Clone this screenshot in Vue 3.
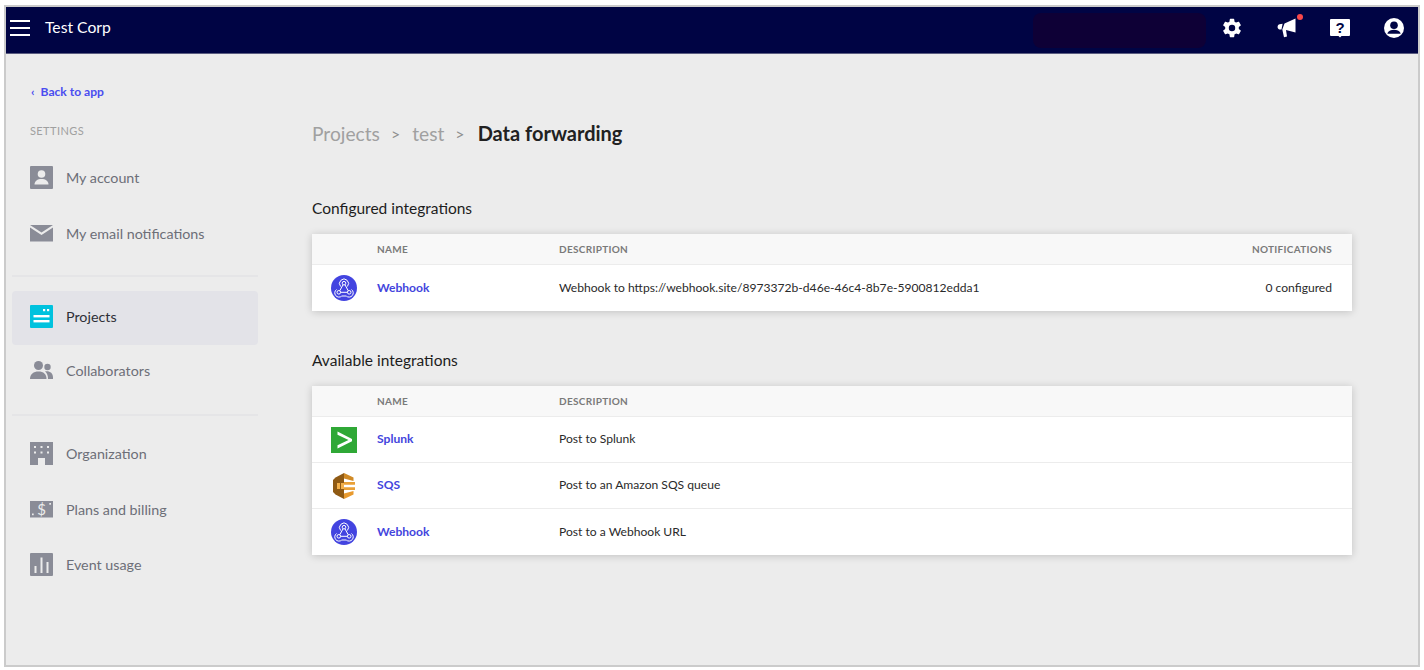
<template>
  <div class="frame">
    <header class="topbar">
      <div class="hamburger"><span></span><span></span><span></span></div>
      <div class="org">Test Corp</div>
      <div class="redacted"></div>
      <div class="top-icons">
        <svg class="top-icon gear" viewBox="0 0 24 24" width="22" height="22">
          <path fill="#fff" d="M19.4 13a7.6 7.6 0 0 0 0-2l2.1-1.6a.5.5 0 0 0 .1-.7l-2-3.4a.5.5 0 0 0-.6-.2l-2.5 1a7.3 7.3 0 0 0-1.700-1l-.4-2.700a.5.5 0 0 0-.5-.4h-3.800a.5.5 0 0 0-.5.4l-.4 2.700a7.3 7.3 0 0 0-1.700 1l-2.500-1a.5.5 0 0 0-.6.2l-2 3.400a.5.5 0 0 0 .1.7L4.600 11a7.600 7.600 0 0 0 0 2l-2.100 1.600a.5.5 0 0 0-.1.7l2 3.400c.1.2.4.3.6.2l2.500-1c.5.4 1.100.7 1.700 1l.4 2.700c0 .2.3.4.5.4h3.800c.2 0 .5-.2.5-.4l.4-2.700c.6-.3 1.200-.6 1.700-1l2.500 1c.2.1.5 0 .6-.2l2-3.400a.5.5 0 0 0-.1-.7zM12 15.500a3.500 3.500 0 1 1 0-7 3.500 3.500 0 0 1 0 7z"/>
        </svg>
        <div class="announce">
          <svg class="top-icon" viewBox="0 0 24 24" width="24" height="24">
            <path fill="#fff" d="M20.500 2.500v14l-9.500-2.500 1 6.500-3 .8L7.300 13.500 9.500 7.500zM4.600 8.200l3-.4-1.100 5.600-2.200.1C3.100 13 2.400 11.800 2.600 10.500c.1-1.100 1-2 2-2.300z"/>
          </svg>
          <i class="dot"></i>
        </div>
        <svg class="top-icon" viewBox="0 0 24 24" width="24" height="24">
          <path fill="#fff" d="M3 3h18a1 1 0 0 1 1 1v15a1 1 0 0 1-1 1h-7.500L12 21.500 10.500 20H3a1 1 0 0 1-1-1V4a1 1 0 0 1 1-1z"/>
          <text x="12" y="17" text-anchor="middle" class="help-mark">?</text>
        </svg>
        <svg class="top-icon" viewBox="0 0 24 24" width="24" height="24">
          <circle cx="12" cy="12" r="10" fill="#fff"/>
          <circle cx="12" cy="9.200" r="3.800" fill="#000444"/>
          <path fill="#000444" d="M5.500 17c1.200-2.200 3.700-3.200 6.500-3.200s5.300 1 6.500 3.200v.7h-13z"/>
        </svg>
      </div>
    </header>

    <div class="body">
      <aside class="sidebar">
        <a class="back"><span class="chev">‹</span>Back to app</a>
        <div class="settings-label">SETTINGS</div>

        <div class="nav-group first">
          <div class="nav-item">
            <svg class="nav-icon" viewBox="0 0 23 23"><rect width="23" height="23" rx="1" fill="#8a8c97"/><circle cx="11.500" cy="8" r="3.800" fill="#ececec"/><path fill="#ececec" d="M4.500 18.500c0-3.500 3-5.500 7-5.500s7 2 7 5.500z"/></svg>
            <span>My account</span>
          </div>
          <div class="nav-item">
            <svg class="nav-icon" viewBox="0 0 23 23"><path fill="#8a8c97" d="M0 3h23L11.500 10.500z"/><path fill="#8a8c97" d="M0 5.500l11.500 7.500L23 5.500V19.500H0z"/></svg>
            <span>My email notifications</span>
          </div>
        </div>

        <div class="nav-group">
          <div class="nav-item active">
            <svg class="nav-icon" viewBox="0 0 23 23"><rect width="23" height="23" rx="1" fill="#00c2de"/><rect x="3.500" y="10" width="16" height="2.400" fill="#fff"/><rect x="3.500" y="15" width="16" height="2.400" fill="#fff"/><rect x="13" y="4" width="2.200" height="2.200" fill="#fff"/><rect x="17" y="4" width="2.200" height="2.200" fill="#fff"/></svg>
            <span>Projects</span>
          </div>
          <div class="nav-item">
            <svg class="nav-icon" viewBox="0 0 23 23"><circle cx="8.500" cy="6.500" r="4.500" fill="#8a8c97"/><circle cx="17.500" cy="8" r="3.200" fill="#8a8c97"/><path fill="#8a8c97" d="M0 20c0-5 3.500-7.500 8.500-7.500s8 2.500 8 7.500z"/><path fill="#8a8c97" d="M15 12.300c4.500-.8 8 1.500 8 6v1.700h-5c0-3.500-1-6-3-7.700z"/></svg>
            <span>Collaborators</span>
          </div>
        </div>

        <div class="nav-group">
          <div class="nav-item">
            <svg class="nav-icon" viewBox="0 0 23 23"><path fill="#8a8c97" d="M0 0h23v23h-8v-7H8v7H0z"/><g fill="#ececec"><rect x="4" y="4" width="2" height="2"/><rect x="10.500" y="4" width="2" height="2"/><rect x="17" y="4" width="2" height="2"/><rect x="4" y="9.500" width="2" height="2"/><rect x="10.500" y="9.500" width="2" height="2"/><rect x="17" y="9.500" width="2" height="2"/></g></svg>
            <span>Organization</span>
          </div>
          <div class="nav-item">
            <svg class="nav-icon" viewBox="0 0 23 23"><rect y="3" width="23" height="16.500" fill="#8a8c97"/><text x="11.500" y="16.500" text-anchor="middle" class="dollar">$</text><rect x="2" y="15.500" width="1.700" height="1.700" fill="#ececec"/><rect x="19.300" y="5" width="1.700" height="1.700" fill="#ececec"/></svg>
            <span>Plans and billing</span>
          </div>
          <div class="nav-item tight">
            <svg class="nav-icon" viewBox="0 0 23 23"><rect width="23" height="23" rx="1" fill="#8a8c97"/><rect x="4.500" y="13" width="2" height="7" fill="#ececec"/><rect x="10.500" y="4.500" width="2" height="15.500" fill="#ececec"/><rect x="16.500" y="9" width="2" height="11" fill="#ececec"/></svg>
            <span>Event usage</span>
          </div>
        </div>
      </aside>

      <main class="main">
        <div class="crumbs">
          <span>Projects</span>
          <span class="sep">&gt;</span>
          <span>test</span>
          <span class="sep">&gt;</span>
          <strong>Data forwarding</strong>
        </div>

        <h2 class="section-title">Configured integrations</h2>
        <div class="card">
          <div class="row head">
            <span></span>
            <span>NAME</span>
            <span>DESCRIPTION</span>
            <span class="right">NOTIFICATIONS</span>
          </div>
          <div class="row" v-for="item in configured" :key="item.name">
            <span class="logo"><svg viewBox="0 0 26 26" width="26" height="26"><circle cx="13" cy="13" r="13" fill="#4344e0"/><g fill="none" stroke="#fff" stroke-width="1"><circle cx="13" cy="8.200" r="1.800"/><circle cx="7.800" cy="17.300" r="1.800"/><circle cx="18.200" cy="17.300" r="1.800"/><path d="M12 9.800L8.800 15.700M14 9.800l3.200 5.900M9.600 17.300h6.800"/><path d="M9.600 11.500a4.500 4.500 0 1 1 6.800 0M10.800 21a4.200 4.200 0 1 1-5.300-6.500M15.200 21a4.200 4.200 0 1 0 5.300-6.500M11 21h4"/></g></svg></span>
            <a class="name">{{ item.name }}</a>
            <span class="cell">{{ item.desc }}</span>
            <span class="cell right">{{ item.note }}</span>
          </div>
        </div>

        <h2 class="section-title">Available integrations</h2>
        <div class="card">
          <div class="row head">
            <span></span>
            <span>NAME</span>
            <span>DESCRIPTION</span>
            <span></span>
          </div>
          <div class="row" v-for="item in available" :key="item.name">
            <span class="logo">
              <svg v-if="item.icon === 'splunk'" viewBox="0 0 26 26" width="26" height="26"><rect width="26" height="26" fill="#2fa836"/><path d="M6.500 4.500L21 12v2.200L6.500 21.500v-3.300L17.500 13 6.500 7.800z" fill="#fff"/></svg>
              <svg v-else-if="item.icon === 'sqs'" viewBox="0 0 26 26" width="26" height="26"><path fill="#8f5a14" d="M13 0L4.500 4.500 2 7v12l2.500 2.500L13 26z"/><path fill="#d08a26" d="M13 0l9.500 4.500v3.500L13 5.500z"/><path fill="#e89a2e" d="M13 26l9.500-4.500V18L13 20.500z"/><rect x="6" y="10" width="3" height="6" fill="#f3b04a"/><rect x="10" y="10" width="3" height="6" fill="#f3b04a"/><path fill="#e9a036" d="M13 9h11v2.800H13zM13 14.200h11V17H13z"/></svg>
              <svg v-else viewBox="0 0 26 26" width="26" height="26"><circle cx="13" cy="13" r="13" fill="#4344e0"/><g fill="none" stroke="#fff" stroke-width="1"><circle cx="13" cy="8.200" r="1.800"/><circle cx="7.800" cy="17.300" r="1.800"/><circle cx="18.200" cy="17.300" r="1.800"/><path d="M12 9.800L8.800 15.700M14 9.800l3.200 5.900M9.600 17.300h6.800"/><path d="M9.600 11.500a4.500 4.500 0 1 1 6.800 0M10.800 21a4.200 4.200 0 1 1-5.300-6.500M15.200 21a4.200 4.200 0 1 0 5.300-6.500M11 21h4"/></g></svg>
            </span>
            <a class="name">{{ item.name }}</a>
            <span class="cell">{{ item.desc }}</span>
            <span></span>
          </div>
        </div>
      </main>
    </div>
  </div>
</template>

<script setup>
const configured = [
  { name: 'Webhook', desc: 'Webhook to https://webhook.site/8973372b-d46e-46c4-8b7e-5900812edda1', note: '0 configured' }
]
const available = [
  { name: 'Splunk', desc: 'Post to Splunk', icon: 'splunk' },
  { name: 'SQS', desc: 'Post to an Amazon SQS queue', icon: 'sqs' },
  { name: 'Webhook', desc: 'Post to a Webhook URL', icon: 'webhook' }
]
</script>

<style>
html, body {
  background: #fff;
  overflow: hidden;
}
</style>

<style scoped>
.frame {
  box-sizing: border-box;
  width: 1416px;
  height: 662px;
  margin: 5px 0 0 4px;
  border: 2px solid #cbcbcb;
  background: #ececec;
  font-family: Lato, "Open Sans", sans-serif;
  display: flex;
  flex-direction: column;
}
.topbar {
  height: 41px;
  padding-bottom: 5px;
  flex: none;
  background: #000444;
  border-bottom: 1px solid #5a5c80;
  box-sizing: content-box;
  display: flex;
  align-items: center;
  color: #fff;
}
.hamburger {
  width: 20px;
  margin-left: 4px;
  display: flex;
  flex-direction: column;
  gap: 5px;
}
.hamburger span {
  display: block;
  height: 2px;
  background: #fff;
}
.org {
  margin-left: 15px;
  font-size: 15.700px;
  margin-bottom: 1px;
}
.redacted {
  width: 173px;
  height: 35px;
  align-self: flex-start;
  margin: 6px 15px 0 auto;
  border-radius: 8px;
  background: #0e0036;
}
.top-icons {
  display: flex;
  align-items: center;
  gap: 30px;
  margin-right: 12px;
}
.top-icon {
  display: block;
}
.gear {
  margin-right: 2px;
}
.announce {
  position: relative;
  margin-right: -1px;
}
.dot {
  position: absolute;
  top: -2px;
  right: -4px;
  width: 6px;
  height: 6px;
  border-radius: 50%;
  background: #f9484a;
}
.help-mark {
  font-family: "Liberation Sans", sans-serif;
  font-size: 15px;
  font-weight: 700;
  fill: #000444;
}
.dollar {
  font-family: Lato, sans-serif;
  font-size: 15px;
  fill: #ececec;
}
.body {
  flex: 1;
  display: flex;
  min-height: 0;
}
.sidebar {
  width: 252px;
  flex: none;
  box-sizing: border-box;
  padding: 30px 0 0 6px;
}
.back {
  display: block;
  margin-left: 19px;
  font-size: 12.100px;
  line-height: 16px;
  color: #4a4df0;
  font-weight: 700;
}
.chev {
  margin-right: 6px;
}
.settings-label {
  margin: 24px 0 0 18px;
  font-size: 11px;
  line-height: 14px;
  letter-spacing: 0.400px;
  color: #a0a0a0;
}
.nav-group {
  border-top: 2px solid #e5e5e7;
  margin-top: 14px;
  padding-top: 14px;
}
.nav-group.first {
  border-top: none;
  margin-top: 0;
  padding-top: 12px;
}
.nav-group:last-child {
  margin-top: 16px;
  padding-top: 10px;
}
.nav-item {
  height: 55px;
  margin-bottom: 1px;
  border-radius: 4px;
  display: flex;
  align-items: center;
  padding-left: 18px;
  font-size: 14.300px;
  color: #6d6f78;
}
.nav-item.active {
  height: 51px;
  padding-bottom: 3px;
  background: #e3e3e8;
  color: #2f3037;
  margin-bottom: -2px;
}
.nav-item.tight {
  margin-top: -1px;
}
.nav-icon {
  width: 23px;
  height: 23px;
  flex: none;
  margin-right: 13px;
}
.main {
  flex: 1;
  padding: 0 0 0 54px;
  min-width: 0;
}
.crumbs {
  margin-top: 64px;
  height: 30px;
  display: flex;
  align-items: center;
  font-size: 19.200px;
  color: #a0a0a0;
}
.crumbs .sep {
  margin: 0 12px 0 11px;
  font-size: 16px;
  color: #8f8f8f;
}
.crumbs strong {
  margin-left: 1px;
  color: #212121;
  font-weight: 700;
  font-size: 20px;
}
.section-title {
  margin: 50px 0 16px;
  font-size: 15.500px;
  line-height: 20px;
  font-weight: 400;
  color: #1d1d1d;
}
.card + .section-title {
  margin: 39px 0 16px;
}
.card {
  width: 1040px;
  background: #fff;
  box-shadow: 0 1px 8px rgba(0, 0, 0, 0.180);
}
.row {
  display: grid;
  grid-template-columns: 65px 182px 1fr auto;
  align-items: center;
  height: 45px;
  padding-right: 20px;
  font-size: 12.100px;
  color: #2a2a2a;
  border-top: 1px solid #ececec;
  box-sizing: content-box;
}
.row:last-child {
  height: 46px;
}
.row.head {
  height: 30px;
  border-top: none;
  background: #f8f8f8;
  font-size: 10px;
  font-weight: 700;
  letter-spacing: 0.300px;
  color: #7a7a7a;
}
.logo {
  display: flex;
  padding-left: 19px;
}
.name,
.cell {
  margin-bottom: 2px;
}
.name {
  font-weight: 700;
  font-size: 12.100px;
  color: #4345dd;
}
.right {
  text-align: right;
}
</style>
